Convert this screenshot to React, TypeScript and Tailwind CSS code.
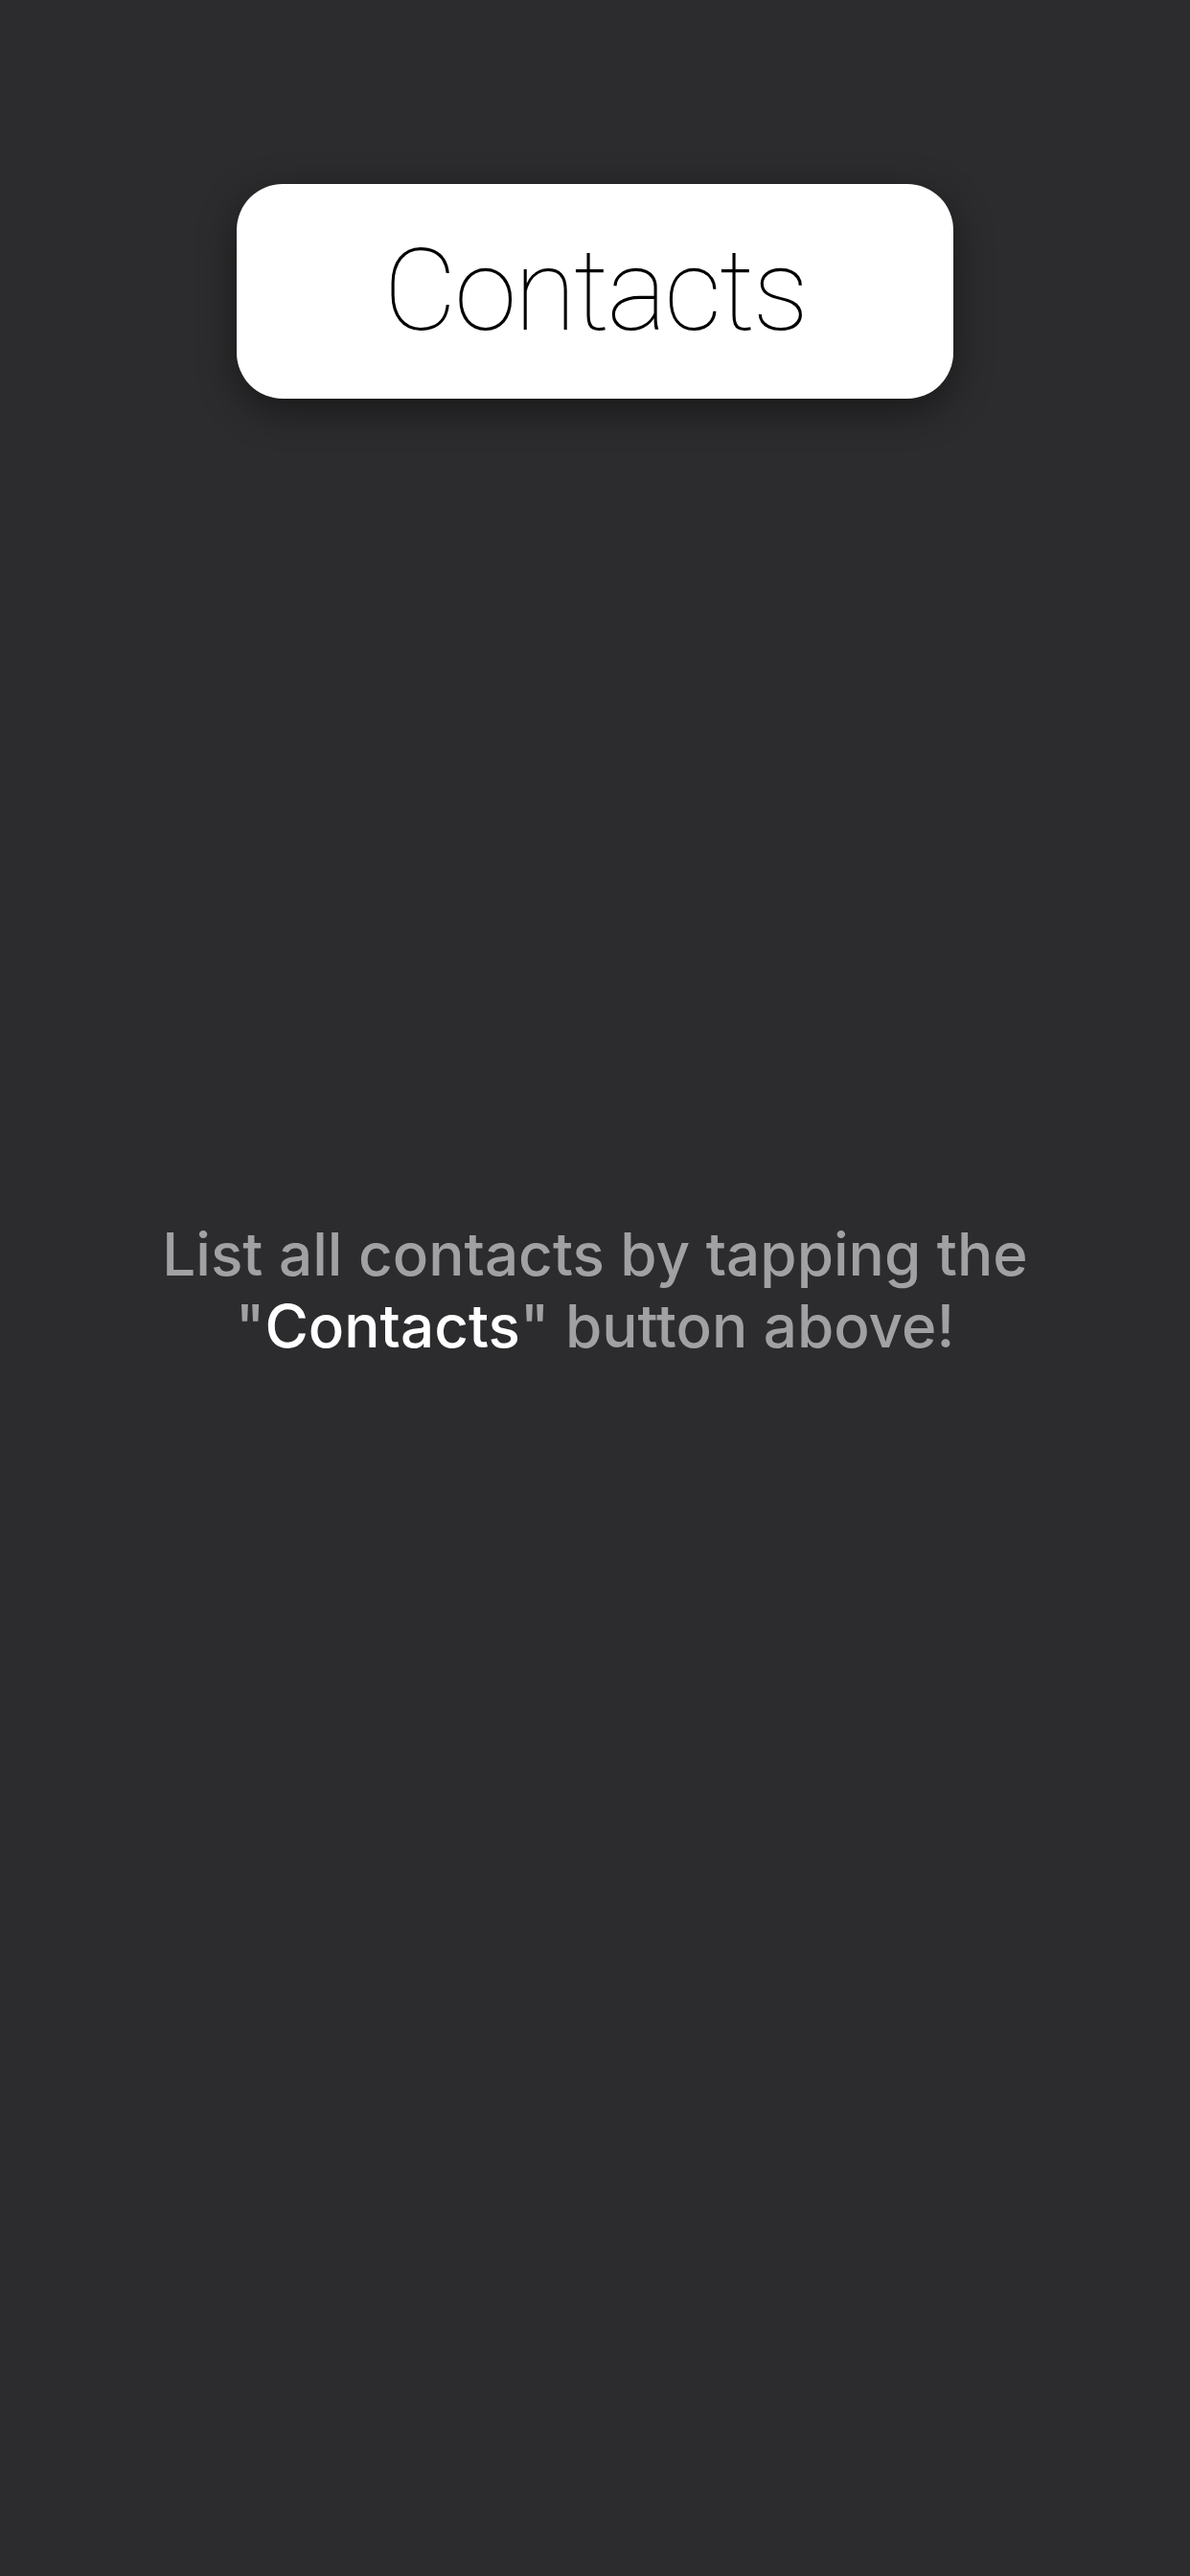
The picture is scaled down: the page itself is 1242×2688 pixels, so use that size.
export default function App() {
  return (
    <div className="min-h-[2688px] w-full bg-[#2c2c2e] flex flex-col items-center pt-[192px]">
      <button
        type="button"
        className="w-[748px] h-[224px] rounded-[48px] bg-white flex items-center justify-center shadow-[0_12px_40px_rgba(0,0,0,0.45)]"
      >
        <span className="text-[118px] leading-none font-thin text-black tracking-[-2.5px] font-['Roboto',sans-serif]">
          Contacts
        </span>
      </button>

      <p className="mt-[855px] text-center text-[62px] leading-[75px] text-[#a1a1a3] font-medium font-['Inter',sans-serif]">
        List all contacts by tapping the
        <br />
        "<span className="text-white">Contacts</span>" button above!
      </p>
    </div>
  );
}
